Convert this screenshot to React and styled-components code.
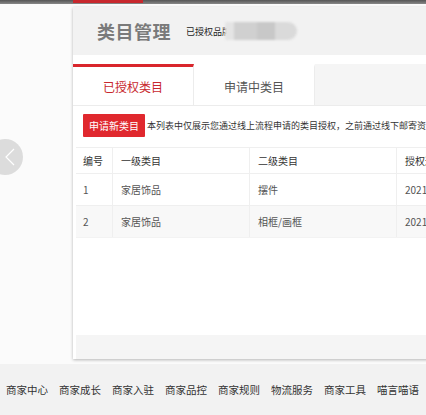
import React from 'react'
import styled, { createGlobalStyle } from 'styled-components'

const Global = createGlobalStyle`
  html, body {
    margin: 0;
    padding: 0;
    overflow: hidden;
    background: #fbfbfb;
    font-family: "Noto Sans CJK SC", "Noto Sans", sans-serif;
  }
`
const Page = styled.div`
  width: 426px;
  height: 415px;
  overflow: hidden;
  display: flex;
  flex-direction: column;
`
const TopBar = styled.div`
  height: 4px;
  flex-shrink: 0;
  padding-left: 73px;
  background: linear-gradient(#555, #888);
`
const RedMark = styled.div`
  width: 70px;
  height: 3px;
  background: #c8282e;
`
const Body = styled.div`
  display: flex;
  height: 355px;
  flex-shrink: 0;
`
const Side = styled.div`
  width: 73px;
  flex-shrink: 0;
  padding-top: 135px;
`
const Circle = styled.div`
  width: 36px;
  height: 36px;
  margin-left: -13px;
  border-radius: 50%;
  background: #dcdcdc;
  display: flex;
  align-items: center;
  justify-content: flex-end;
  padding-right: 8px;
  box-sizing: border-box;
`
const Panel = styled.div`
  width: 440px;
  flex-shrink: 0;
  margin-top: 3px;
  background: #fff;
  box-shadow: 0 1px 3px rgba(0, 0, 0, 0.28);
  display: flex;
  flex-direction: column;
`
const Header = styled.div`
  height: 48px;
  background: #f2f2f2;
  display: flex;
  align-items: center;
  padding-left: 24px;
`
const Title = styled.h1`
  margin: 0;
  font-size: 18px;
  font-weight: 700;
  color: #7a7a7a;
  letter-spacing: 0.5px;
`
const Brand = styled.span`
  margin-left: 15px;
  font-size: 9px;
  color: #222;
`
const Blur = styled.div`
  width: 72px;
  height: 18px;
  margin-left: -6px;
  border-radius: 2px 10px 10px 2px;
  background: linear-gradient(90deg, #e4e4e4 0 12%, #d0d0d0 12% 45%, #c8c8c8 45% 70%, #dadada 70% 100%);
  filter: blur(1.2px);
`
const Tabs = styled.div`
  margin-top: 9px;
  display: flex;
  height: 41px;
  background: #f5f5f5;
  border-bottom: 1px solid #ececec;
`
const Tab = styled.div`
  width: 121px;
  box-sizing: border-box;
  background: #fff;
  border-top: 3px solid ${(p) => (p.active ? '#d9262c' : '#fff')};
  border-right: 1px solid #ececec;
  display: flex;
  align-items: center;
  justify-content: center;
  font-size: 12px;
  color: ${(p) => (p.active ? '#c8282e' : '#555')};
`
const Content = styled.div`
  flex: 1;
  padding: 8px 0 0 3px;
  display: flex;
  flex-direction: column;
`
const Notice = styled.div`
  display: flex;
  align-items: center;
  padding-left: 7px;
  white-space: nowrap;
`
const ApplyButton = styled.button`
  flex-shrink: 0;
  width: 62px;
  height: 23px;
  border: 0;
  border-radius: 1px;
  background: #e0282e;
  color: #fff;
  font-family: inherit;
  font-size: 10px;
  padding: 0;
`
const NoticeText = styled.span`
  margin-left: 2px;
  font-size: 9px;
  color: #333;
`
const Table = styled.div`
  margin-top: 10px;
  display: grid;
  grid-template-columns: 36px 137px 147px 140px;
`
const Cell = styled.div`
  height: ${(p) => (p.head ? 26 : 32)}px;
  box-sizing: border-box;
  display: flex;
  align-items: center;
  padding-left: ${(p) => (p.first ? 7 : 8)}px;
  font-size: 10px;
  color: ${(p) => (p.head ? '#333' : '#555')};
  background: ${(p) => (p.shade ? '#f8f8f8' : '#fff')};
  border-top: 1px solid #efefef;
  border-left: ${(p) => (p.first ? 0 : '1px solid #efefef')};
  white-space: nowrap;
  overflow: hidden;
`
const Spacer = styled.div`
  flex: 1;
  border-top: 1px solid #f3f3f3;
`
const PanelFoot = styled.div`
  height: 24px;
  background: #f5f5f5;
`
const Footer = styled.div`
  flex: 1;
  margin-top: 5px;
  background: #f2f2f2;
  display: flex;
  align-items: center;
  gap: 11px;
  padding: 0 0 0 6px;
  white-space: nowrap;
`
const FooterLink = styled.a`
  font-size: 10.5px;
  color: #333;
  text-decoration: none;
`

const rows = [
  ['1', '家居饰品', '摆件', '2021-03-15 10:22:31'],
  ['2', '家居饰品', '相框/画框', '2021-03-15 10:22:31'],
]
const links = ['商家中心', '商家成长', '商家入驻', '商家品控', '商家规则', '物流服务', '商家工具', '喵言喵语']

export default function App() {
  return (
    <Page>
      <Global />
      <TopBar>
        <RedMark />
      </TopBar>
      <Body>
        <Side>
          <Circle>
            <svg width="10" height="18" viewBox="0 0 10 18">
              <path d="M9 1 L1 9 L9 17" fill="none" stroke="#fff" strokeWidth="1.2" />
            </svg>
          </Circle>
        </Side>
        <Panel>
          <Header>
            <Title>类目管理</Title>
            <Brand>已授权品牌</Brand>
            <Blur />
          </Header>
          <Tabs>
            <Tab active>已授权类目</Tab>
            <Tab>申请中类目</Tab>
          </Tabs>
          <Content>
            <Notice>
              <ApplyButton>申请新类目</ApplyButton>
              <NoticeText>本列表中仅展示您通过线上流程申请的类目授权，之前通过线下邮寄资料申请的类目授权请联系小二</NoticeText>
            </Notice>
            <Table>
              {['编号', '一级类目', '二级类目', '授权通过时间'].map((h, i) => (
                <Cell head first={i === 0} key={h}>
                  {h}
                </Cell>
              ))}
              {rows.map((r, ri) =>
                r.map((c, i) => (
                  <Cell first={i === 0} shade={ri === 1} key={ri + '-' + i}>
                    {c}
                  </Cell>
                ))
              )}
            </Table>
            <Spacer />
            <PanelFoot />
          </Content>
        </Panel>
      </Body>
      <Footer>
        {links.map((l) => (
          <FooterLink key={l}>{l}</FooterLink>
        ))}
      </Footer>
    </Page>
  )
}
